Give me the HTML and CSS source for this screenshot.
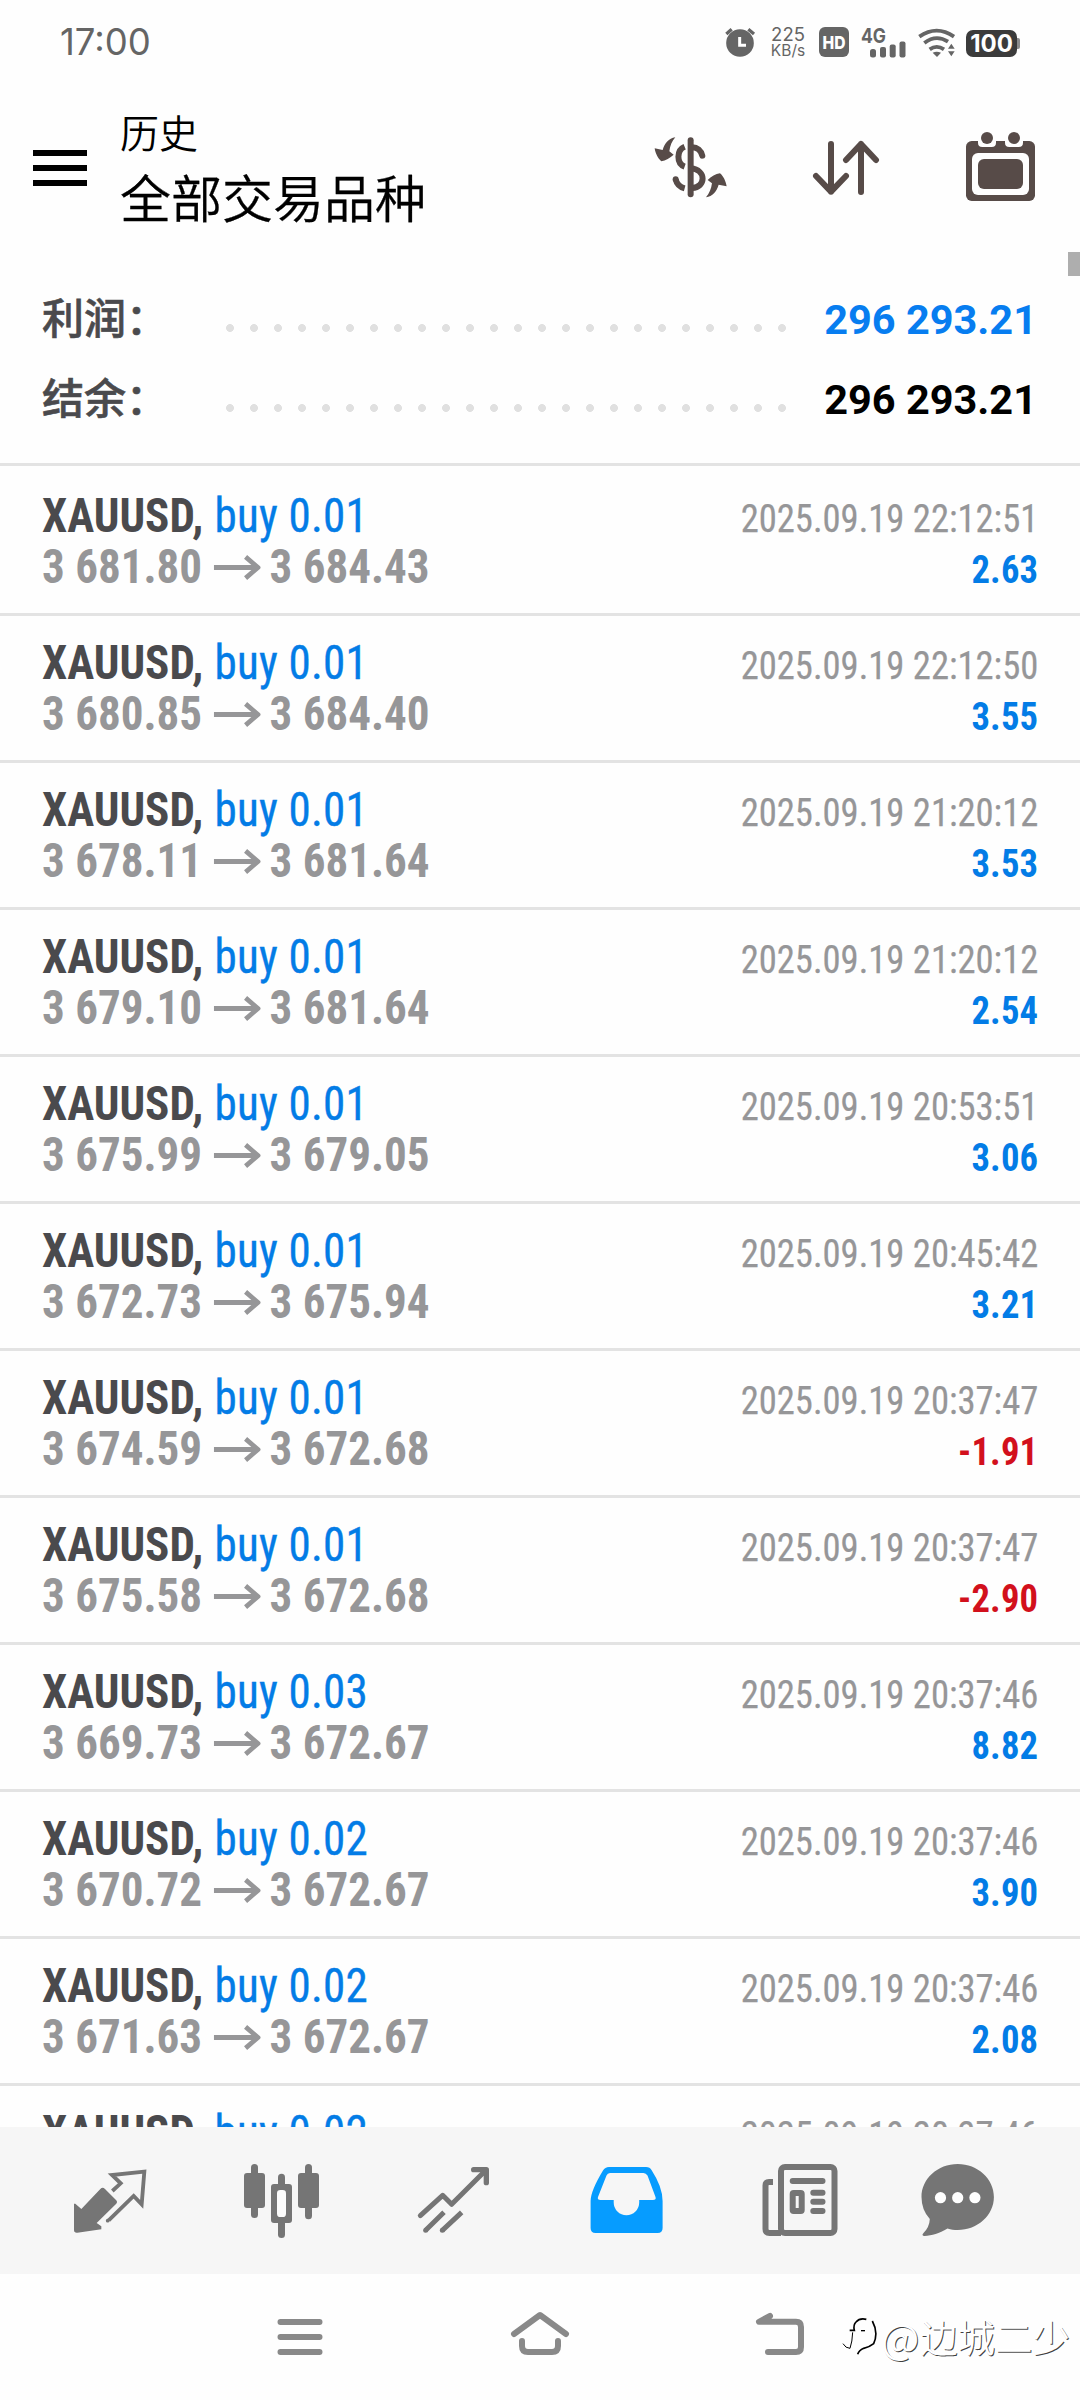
FILE: index.html
```
<!DOCTYPE html>
<html lang="zh-CN">
<head>
<meta charset="utf-8">
<title>历史</title>
<link rel="stylesheet" href="styles.css">
</head>
<body>
<svg class="defs" width="0" height="0" aria-hidden="true">
  <symbol id="to" viewBox="0 0 46 24" preserveAspectRatio="none"><path d="M0 12H43M31 1.8L43 12L31 22.2" fill="none" stroke="currentColor" stroke-width="4.6"/></symbol>
</svg>
<div class="screen">
  <div class="status">
    <span class="clock">17:00</span>
    <svg class="s-alarm" width="30" height="31" viewBox="33 36 90 93"><circle cx="78" cy="84" r="41.5" fill="#656565"/><path d="M37 57L53 43M103 43L120 57" stroke="#656565" stroke-width="10"/><path d="M77 66V91H96" fill="none" stroke="#fff" stroke-width="9"/></svg>
    <span class="net"><span class="net-n">225</span><span class="net-u">KB/s</span></span>
    <svg class="s-hd" width="30" height="30" viewBox="0 0 30 30"><rect width="30" height="30" rx="6" fill="#656565"/><text class="hd-text" x="15" y="21.500" text-anchor="middle" textLength="23" lengthAdjust="spacingAndGlyphs">HD</text></svg>
    <svg class="s-sig" width="45" height="31" viewBox="0 0 45 31"><text class="g4-text" x="0" y="15.5" textLength="25" lengthAdjust="spacingAndGlyphs">4G</text><g fill="#656565"><rect x="9" y="22" width="6" height="8.5" rx="2.5"/><rect x="19" y="20" width="6" height="10.5" rx="2"/><rect x="28.7" y="17.500" width="6" height="13" rx="2"/><rect x="38.500" y="14.500" width="6" height="16" rx="2"/></g></svg>
    <svg class="s-wifi" width="37" height="31" viewBox="608 36 111 93"><g fill="none" stroke="#656565" stroke-width="11.500"><path d="M612 65Q664 29 716 65"/><path d="M627 84Q662 57 698 80"/><path d="M643 103Q664 88 686 103"/></g><path d="M652 113Q664 107 677 113L665 126ZM698 101L708 86L718 101ZM698 109H718L708 124Z" fill="#656565"/></svg>
    <span class="battery">100</span>
  </div>

  <header class="appbar">
    <svg width="54" height="36" viewBox="0 0 54 36"><path d="M0 3H54M0 18H54M0 33H54" stroke="#000" stroke-width="6"/></svg>
    <div class="titles"><div class="t-small">历史</div><div class="t-big">全部交易品种</div></div>
    <div class="actions">
      <svg width="73.300" height="63.300" viewBox="40 50 220 190">
        <g fill="none" stroke="#574b48" stroke-width="18"><path d="M132 82C107 92 107 133 132 142"/><path d="M155 84C170 84 181 94 185 109" stroke-linecap="round"/><path d="M150 147C200 152 194 205 155 206"/><path d="M132 207C117 203 108 193 105 180"/><path d="M150 63V225" stroke-linecap="round"/></g>
        <circle cx="105" cy="180" r="9" fill="#574b48"/>
        <path id="swing" fill="#574b48" d="M104 54C84 57 72 72 66 92L42 87C44 102 52 118 62 126C75 124 88 116 99 106L86 96C88 80 94 65 104 54Z"/>
        <use href="#swing" transform="rotate(180 150 144)"/>
      </svg>
      <svg width="68" height="56" viewBox="516 60 204 168"><g fill="none" stroke="#574b48" stroke-width="18" stroke-linecap="round" stroke-linejoin="round"><path d="M573 72V215M528 168L573 215L618 168M663 216V72M618 120L663 72L708 120"/></g></svg>
      <svg class="cal" width="71" height="71" viewBox="975 33 213 213"><rect x="978" y="63" width="207" height="180" rx="17" fill="#574b48"/><path d="M1014 55H1068V68Q1068 81 1055 81H1027Q1014 81 1014 68ZM1095 55H1149V68Q1149 81 1136 81H1108Q1095 81 1095 68Z" fill="#fefefe"/><circle cx="1041" cy="54" r="18" fill="#574b48"/><circle cx="1122" cy="54" r="18" fill="#574b48"/><rect x="996" y="99" width="171" height="126" rx="18" fill="#fefefe"/><rect x="1014" y="117" width="135" height="90" rx="18" fill="#574b48"/></svg>
    </div>
  </header>

  <main class="content">
    <div class="thumb"></div>
    <section class="summary">
      <div class="sum"><span class="label">利润：</span><span class="dots"></span><span class="amount blue">296 293.21</span></div>
      <div class="sum"><span class="label">结余：</span><span class="dots"></span><span class="amount">296 293.21</span></div>
    </section>
    <section class="deals">
      <article class="deal"><div class="left"><div class="l1"><b>XAUUSD,</b> <span class="side">buy 0.01</span></div><div class="l2">3 681.80<svg class="to"><use href="#to"/></svg>3 684.43</div></div><div class="right"><div class="time">2025.09.19 22:12:51</div><div class="val">2.63</div></div></article>
      <article class="deal"><div class="left"><div class="l1"><b>XAUUSD,</b> <span class="side">buy 0.01</span></div><div class="l2">3 680.85<svg class="to"><use href="#to"/></svg>3 684.40</div></div><div class="right"><div class="time">2025.09.19 22:12:50</div><div class="val">3.55</div></div></article>
      <article class="deal"><div class="left"><div class="l1"><b>XAUUSD,</b> <span class="side">buy 0.01</span></div><div class="l2">3 678.11<svg class="to"><use href="#to"/></svg>3 681.64</div></div><div class="right"><div class="time">2025.09.19 21:20:12</div><div class="val">3.53</div></div></article>
      <article class="deal"><div class="left"><div class="l1"><b>XAUUSD,</b> <span class="side">buy 0.01</span></div><div class="l2">3 679.10<svg class="to"><use href="#to"/></svg>3 681.64</div></div><div class="right"><div class="time">2025.09.19 21:20:12</div><div class="val">2.54</div></div></article>
      <article class="deal"><div class="left"><div class="l1"><b>XAUUSD,</b> <span class="side">buy 0.01</span></div><div class="l2">3 675.99<svg class="to"><use href="#to"/></svg>3 679.05</div></div><div class="right"><div class="time">2025.09.19 20:53:51</div><div class="val">3.06</div></div></article>
      <article class="deal"><div class="left"><div class="l1"><b>XAUUSD,</b> <span class="side">buy 0.01</span></div><div class="l2">3 672.73<svg class="to"><use href="#to"/></svg>3 675.94</div></div><div class="right"><div class="time">2025.09.19 20:45:42</div><div class="val">3.21</div></div></article>
      <article class="deal"><div class="left"><div class="l1"><b>XAUUSD,</b> <span class="side">buy 0.01</span></div><div class="l2">3 674.59<svg class="to"><use href="#to"/></svg>3 672.68</div></div><div class="right"><div class="time">2025.09.19 20:37:47</div><div class="val loss">-1.91</div></div></article>
      <article class="deal"><div class="left"><div class="l1"><b>XAUUSD,</b> <span class="side">buy 0.01</span></div><div class="l2">3 675.58<svg class="to"><use href="#to"/></svg>3 672.68</div></div><div class="right"><div class="time">2025.09.19 20:37:47</div><div class="val loss">-2.90</div></div></article>
      <article class="deal"><div class="left"><div class="l1"><b>XAUUSD,</b> <span class="side">buy 0.03</span></div><div class="l2">3 669.73<svg class="to"><use href="#to"/></svg>3 672.67</div></div><div class="right"><div class="time">2025.09.19 20:37:46</div><div class="val">8.82</div></div></article>
      <article class="deal"><div class="left"><div class="l1"><b>XAUUSD,</b> <span class="side">buy 0.02</span></div><div class="l2">3 670.72<svg class="to"><use href="#to"/></svg>3 672.67</div></div><div class="right"><div class="time">2025.09.19 20:37:46</div><div class="val">3.90</div></div></article>
      <article class="deal"><div class="left"><div class="l1"><b>XAUUSD,</b> <span class="side">buy 0.02</span></div><div class="l2">3 671.63<svg class="to"><use href="#to"/></svg>3 672.67</div></div><div class="right"><div class="time">2025.09.19 20:37:46</div><div class="val">2.08</div></div></article>
      <article class="deal"><div class="left"><div class="l1"><b>XAUUSD,</b> <span class="side">buy 0.02</span></div></div><div class="right"><div class="time">2025.09.19 20:37:46</div></div></article>
    </section>
  </main>

  <nav class="tabs">
    <svg viewBox="0 0 300 300"><path d="M157 120L182 97L156 72L253 62L245 160L221 135L146 208" fill="none" stroke="#757575" stroke-width="11.500"/><circle cx="143" cy="209" r="5.500" fill="#757575"/><path d="M121 114Q128 107 135 114L168 147Q174 153 168 159L110 216L124 226V235L52 245Q42 246 42 237V158H46L64 174Z" fill="#757575"/></svg>
    <svg viewBox="516 0 300 300" fill="#757575"><rect x="573" y="39" width="21" height="162" rx="10.500"/><rect x="552" y="66" width="63" height="105" rx="9"/><rect x="654" y="68" width="21" height="193" rx="10.500"/><rect x="633" y="99" width="63" height="117" rx="9"/><rect x="651" y="117" width="27" height="81" rx="10" fill="#fbfbfb"/><rect x="735" y="39" width="21" height="166" rx="10.500"/><rect x="714" y="66" width="63" height="105" rx="9"/></svg>
    <svg viewBox="1032 0 300 300"><g fill="none" stroke="#757575" stroke-width="15" stroke-linejoin="round"><path d="M1081 194L1148 133L1175 160L1275 60" stroke-linecap="round"/><path d="M1097 238L1152 184M1147 238L1205 184"/><path d="M1241 56H1279V95" stroke-linecap="round" stroke-width="16"/></g><path d="M1258 60H1280V83Z" fill="#757575"/><circle cx="1097" cy="238" r="7.500" fill="#757575"/><circle cx="1147" cy="238" r="7.500" fill="#757575"/></svg>
    <svg viewBox="0 0 100 100"><path fill="#069cff" fill-rule="evenodd" d="M33 16H70Q74 16 75.500 19Q86.600 36 86.600 50V77Q86.600 82 81.600 82H19.600Q14.600 82 14.600 77V50Q14.600 40 27 19.500Q29 16 33 16ZM34 22Q31.500 22 30.500 24.500L22 46Q21 49 24.500 49H37.700V51.500A12.700 12.700 0 0 0 63.200 51.500V49H77Q80.500 49 79.500 46L71.500 24.500Q70 22 67.500 22Z"/></svg>
    <svg viewBox="0 0 100 100"><g fill="none" stroke="#757575" stroke-width="6"><rect x="33" y="16" width="53.500" height="66" rx="4"/><path d="M25 31H21Q17.500 31 17.500 34.500V78Q17.500 82 21.500 82H33"/><path d="M44.700 30H74.500M65.300 41.800H74.500M65.300 50.800H74.500M65.300 60H74.500" stroke-linecap="round"/><rect x="44.700" y="42" width="9" height="18" rx="1"/></g></svg>
    <svg viewBox="0 0 100 100"><path fill="#757575" d="M37.700 13C57.700 13 73.900 27.800 73.900 46S57.700 79 37.700 79C34 79 31 78.700 27.500 77.500C19 82.500 12 84.500 4.500 85Q1 84.500 3.500 82Q9.500 76 9.800 68Q1.500 59 1.500 46C1.500 27.800 17.700 13 37.700 13Z"/><g fill="#fff"><circle cx="20.500" cy="46.700" r="5.600"/><circle cx="37.700" cy="46.700" r="5.600"/><circle cx="54.900" cy="46.700" r="5.600"/></g></svg>
  </nav>

  <div class="sysnav">
    <svg viewBox="0 0 80 60"><path d="M20.500 15H59.500M20.500 30H59.500M20.500 45H59.500"/></svg>
    <svg viewBox="0 0 80 60"><path d="M14 27L40 8L66 27M22 34V39Q22 45 28 45H52Q58 45 58 39V34"/></svg>
    <svg viewBox="0 0 80 60"><path d="M30 9L19 14.800H56Q61 14.800 61 20V40Q61 45 56 45H28"/></svg>
    <div class="mark">
      <svg width="36" height="40" viewBox="35 75 108 120" fill="none" stroke="#000"><path d="M108 85Q88 80 77 93Q68 102 72 118H58" stroke-width="5"/><path d="M67 124Q66 152 59 172Q46 172 38 158" stroke-width="3"/><path d="M126 90Q145 125 130 158Q118 168 100 172Q86 178 82 190" stroke-width="5"/><path d="M92 119H104" stroke-width="4"/></svg>
      <span class="at">@</span><span>边城二少</span>
    </div>
  </div>
</div>
</body>
</html>
```
FILE: styles.css
```
* { box-sizing: border-box; }
body { margin: 0; background: #fefefe; font-family: Roboto, "Noto Sans CJK SC", sans-serif; }
svg { display: block; flex: none; }
.defs { position: absolute; }
.screen { width: 1080px; height: 2400px; display: flex; flex-direction: column; overflow: hidden; }

/* status bar */
.status { height: 84px; flex: none; display: flex; align-items: center; padding: 0 60px; color: #656565; font-family: Inter, sans-serif; }
.status svg { overflow: visible; }
.clock { font-size: 36.5px; line-height: 40px; margin-right: auto; }
.net { width: 36px; margin-left: 15px; display: flex; flex-direction: column; align-items: center; }
.net-n { font-size: 18.5px; line-height: 17px; }
.net-u { font-size: 15.5px; line-height: 15px; }
.s-hd { margin-left: 13px; }
.hd-text { font: 800 18px Inter, sans-serif; fill: #fff; }
.s-sig { margin-left: 12px; }
.g4-text { font: 700 20px Inter, sans-serif; fill: #656565; }
.s-wifi { margin-left: 12px; }
.battery { position: relative; width: 51px; height: 27px; margin: 2px 3px 0 11px; border-radius: 7px; background: #3b3b3b; color: #fff; font-weight: 700; font-size: 24px; line-height: 27px; text-align: center; }
.battery::after { content: ""; position: absolute; left: 51px; top: 8px; width: 3px; height: 11px; border-radius: 0 2px 2px 0; background: #8b8b8b; }

/* app bar */
.appbar { height: 168px; flex: none; display: flex; align-items: center; padding: 0 44px 0 33px; }
.titles { margin: -6px 0 0 33px; font-family: "Noto Sans CJK SC", sans-serif; color: #000; font-weight: 350; }
.t-small { font-size: 39px; line-height: 60px; }
.t-big { font-size: 51px; line-height: 66px; padding-top: 2px; -webkit-text-stroke: .3px #000; }
.actions { margin-left: auto; display: flex; align-items: center; gap: 85px; }
.cal { margin-top: -3px; }

/* history */
.content { position: relative; flex: 1; min-height: 0; overflow: hidden; }
.thumb { position: absolute; right: 0; top: 0; width: 12px; height: 24px; background: #aeaeae; }
.summary { height: 214px; padding: 23px 42px 0; border-bottom: 3px solid #e3e3e3; }
.sum { display: flex; height: 80px; }
.label { width: 176px; padding-top: 1px; font: 500 42px/80px "Noto Sans CJK SC", sans-serif; color: #4a4a4d; -webkit-text-stroke: .6px #4a4a4d; white-space: nowrap; }
.dots { width: 576px; height: 8px; margin-top: 49px; background: radial-gradient(circle, #e0e0e0 3.6px, transparent 4.3px) 0 0 / 24px 8px; }
.amount { margin: 0 1px 0 auto; font-size: 41.5px; line-height: 80px; font-weight: 700; padding-top: 5px; color: #000; white-space: nowrap; }
.amount.blue { color: #077df0; }
.deals { padding-top: 3px; font-family: "Roboto Condensed", Roboto, sans-serif; font-stretch: 75%; }
.deal { height: 147px; border-bottom: 3px solid #e3e3e3; padding: 21px 42px 0; display: flex; justify-content: space-between; white-space: nowrap; }
.left { font-size: 48px; line-height: 51px; transform: scaleX(.938); transform-origin: left; }
.l1 { color: #4a4a4d; }
.side { color: #037ce6; letter-spacing: .25px; margin-left: 1px; -webkit-text-stroke: .35px #037ce6; }
.l2 { display: flex; align-items: center; font-weight: 700; color: #969698; }
.to { width: 50.5px; height: 25px; margin: 2px 9.5px 0 12px; }
.right { padding-top: 4px; font-size: 39px; line-height: 51px; text-align: right; transform: scaleX(.938); transform-origin: right; }
.time { color: #969698; -webkit-text-stroke: .25px #969698; }
.val { color: #037ce6; font-weight: 700; letter-spacing: .2px; }
.val.loss { color: #d2101c; }

/* tabs */
.tabs { height: 147px; flex: none; display: flex; align-items: center; gap: 72px; padding-left: 60px; background: #f6f6f6; }
.tabs svg { width: 100px; height: 100px; }

/* system navigation */
.sysnav { position: relative; height: 126px; flex: none; display: flex; align-items: center; justify-content: center; gap: 160px; }
.sysnav > svg { width: 80px; height: 60px; fill: none; stroke: #898989; stroke-width: 6; stroke-linecap: round; stroke-linejoin: round; }
.mark { position: absolute; left: 842px; top: 39px; height: 46px; display: flex; align-items: center; font: 350 37.5px/46px "Noto Sans CJK SC", sans-serif; color: #fff; text-shadow: 1px 1px 0 rgba(0, 0, 0, .75); white-space: nowrap; }
.at { width: 42px; padding-left: 3px; font-size: 41px; }
```
